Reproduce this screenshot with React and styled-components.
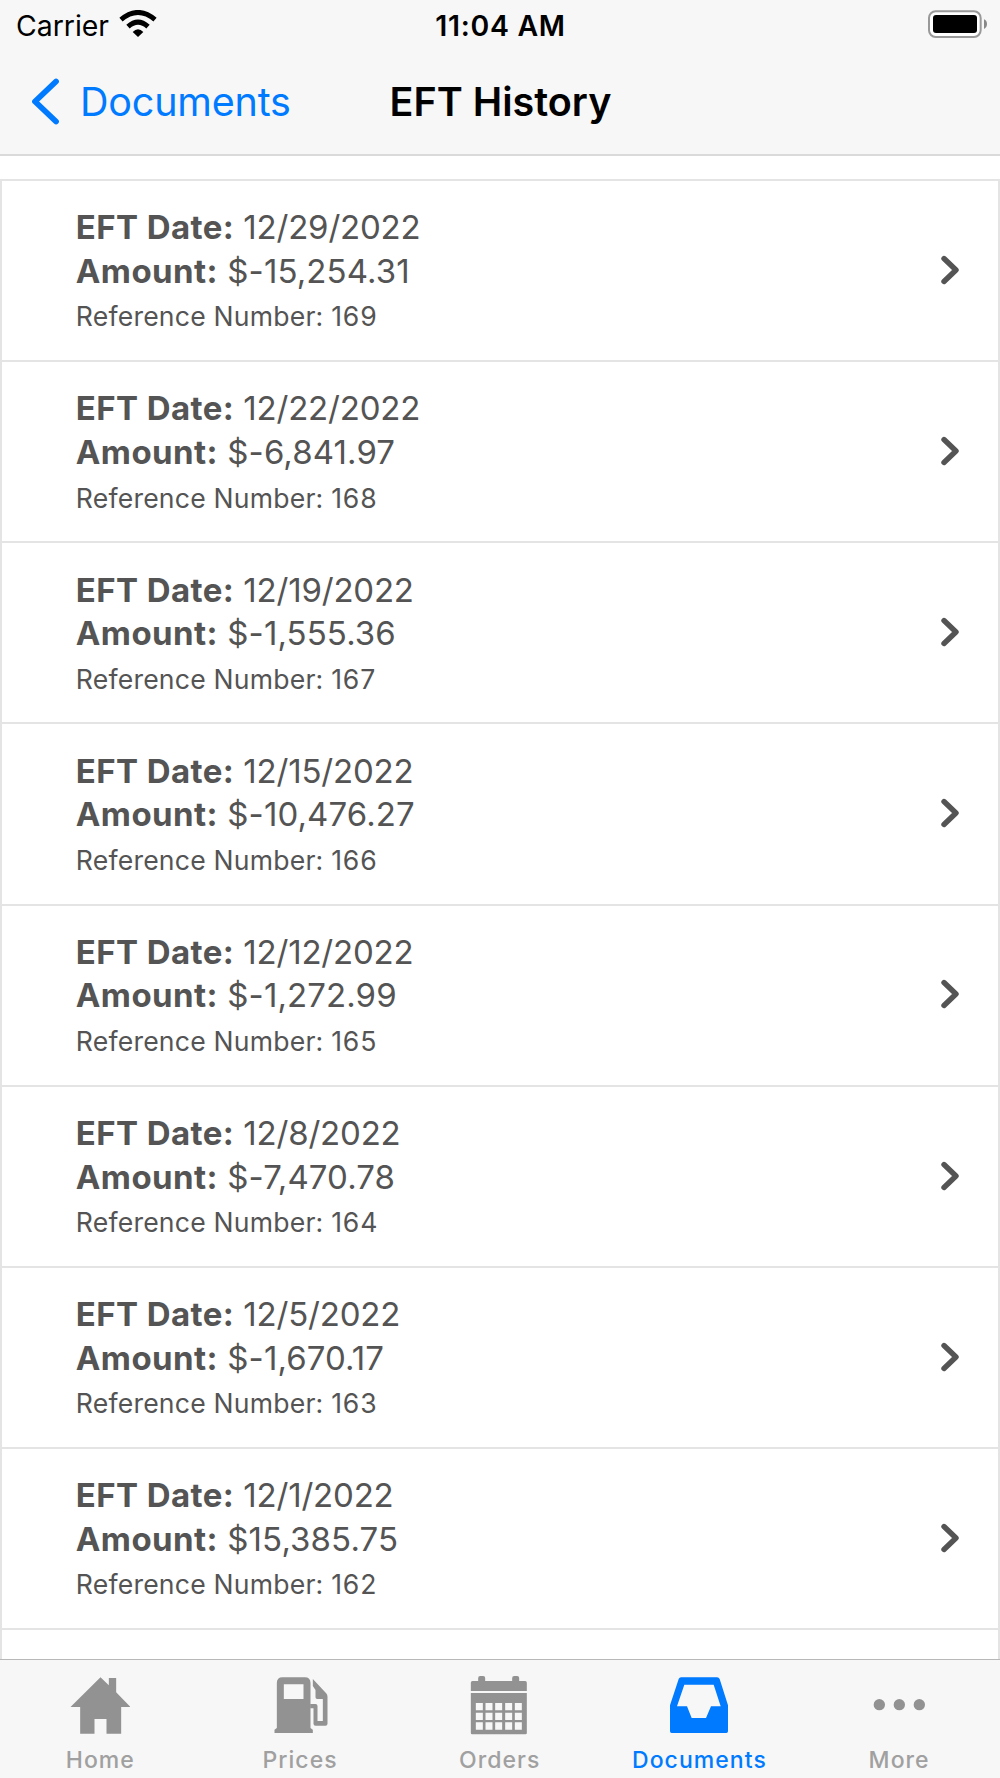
import React from "react";
import styled, { createGlobalStyle } from "styled-components";

const BLUE = "#007aff";
const GREY = "#929292";

const GlobalStyle = createGlobalStyle`
  *, *::before, *::after { box-sizing: border-box; }
  html, body { margin: 0; padding: 0; background: #fff; }
  body { font-family: Inter, "Liberation Sans", sans-serif; }
`;

const Screen = styled.div`
  width: 1000px;
  height: 1778px;
  display: flex;
  flex-direction: column;
  overflow: hidden;
  background: #fff;
`;

const Header = styled.header`
  flex: none;
  height: 156px;
  background: #f7f7f7;
  border-bottom: 2px solid #dadada;
`;

const StatusBar = styled.div`
  height: 50px;
  padding: 0 13px 0 16px;
  display: grid;
  grid-template-columns: 1fr auto 1fr;
  align-items: start;
  color: #000;
  font-size: 28.4px;
  line-height: 51px;
`;

const CarrierGroup = styled.div`
  display: flex;
  gap: 10px;
`;

const Clock = styled.time`
  font-weight: 570;
  letter-spacing: 0.7px;
  margin-right: 2px;
`;

const WifiIcon = styled.svg`
  width: 38px;
  height: 28px;
  margin-top: 10px;
`;

const BatteryIcon = styled.svg`
  justify-self: end;
  width: 60px;
  height: 28px;
  margin-top: 10px;
`;

const NavBar = styled.nav`
  height: 104px;
  padding: 0 29px 0 30px;
  display: grid;
  grid-template-columns: 1fr auto 1fr;
  font-size: 39.5px;
  line-height: 105px;
`;

const BackButton = styled.a`
  display: flex;
  gap: 19px;
  height: 105px;
  color: ${BLUE};
  letter-spacing: -0.2px;
`;

const BackChevron = styled.svg`
  width: 31px;
  height: 50px;
  margin-top: 26px;
`;

const Title = styled.h1`
  margin: 0;
  font-size: inherit;
  font-weight: 600;
  color: #000;
`;

const Content = styled.main`
  flex: 1;
  min-height: 0;
  overflow: hidden;
  padding-top: 23px;
`;

const List = styled.ul`
  margin: 0;
  padding: 0;
  height: 1600px;
  list-style: none;
  border: 2px solid #e4e4e4;
`;

const Row = styled.li`
  height: 181.15px;
  padding: 25.3px 38px 0 73.8px;
  display: flex;
  justify-content: space-between;
  border-bottom: 2px solid #e4e4e4;
  color: #545454;
`;

const Line = styled.p`
  margin: 0;
  font-size: 33px;
  line-height: 43.6px;
  letter-spacing: ${(p) => p.$spacing};
`;

const Label = styled.strong`
  font-weight: 700;
  letter-spacing: 0.42px;
`;

const Reference = styled.p`
  margin: 0;
  font-size: 26.6px;
  line-height: 47.4px;
  letter-spacing: 0.2px;
`;

const ReferenceValue = styled.span`
  letter-spacing: 0.9px;
`;

const RowChevron = styled.svg`
  width: 20px;
  height: 30px;
  margin-top: 48.6px;
`;

const TabBar = styled.footer`
  flex: none;
  height: 119px;
  padding: 15px 1.5px 0 0;
  display: grid;
  grid-template-columns: repeat(5, 1fr);
  background: #f7f7f7;
  border-top: 1px solid #b8b8b8;
`;

const Tab = styled.a`
  display: flex;
  flex-direction: column;
  align-items: center;
  color: ${(p) => (p.$active ? BLUE : "#a0a0a0")};
  font-size: 23px;
  font-weight: 500;
  line-height: 28px;
  letter-spacing: 1.05px;
  text-indent: 1px;
`;

const TabIcon = styled.svg`
  width: 60px;
  height: 60px;
  margin-bottom: 11px;
  fill: ${(p) => (p.$active ? BLUE : GREY)};
`;

const records = [
  ["12/29/2022", "$-15,254.31", 169],
  ["12/22/2022", "$-6,841.97", 168],
  ["12/19/2022", "$-1,555.36", 167],
  ["12/15/2022", "$-10,476.27", 166],
  ["12/12/2022", "$-1,272.99", 165],
  ["12/8/2022", "$-7,470.78", 164],
  ["12/5/2022", "$-1,670.17", 163],
  ["12/1/2022", "$15,385.75", 162],
];

const calendarCells = [279, 308, 337]
  .flatMap((y) => [138, 167, 196, 226, 255].map((x) => `M${x} ${y}v22h21v-22z`))
  .join("");

const tabs = [
  {
    name: "Home",
    box: "89.5 195 180 180",
    shape: <path d="M181 202L206 226V204H228V247L271 291H243V371H199V327H163V371H120V291H91Z" />,
  },
  {
    name: "Prices",
    box: "688.5 195 180 180",
    shape: (
      <>
        <path fillRule="evenodd" d="M709 354V219Q709 202 726 202H793Q810 202 810 219V354L817 359V369H702V359ZM730 223V267H789V223Z" />
        <path d="M809 282H825Q831 282 831 288V333H847V267H830Q825 267 825 262V240L817 228V207L857 250Q861 254 861 260V341Q861 347 855 347H825Q819 347 819 341V295H809Z" />
      </>
    ),
  },
  {
    name: "Orders",
    box: "117.5 195 180 180",
    shape: (
      <>
        <path d="M123 243V218Q123 213 128 213H145V204Q145 198 151 198H160Q166 198 166 204V213H247V204Q247 198 253 198H262Q268 198 268 204V213H286Q291 213 291 218V243Z" />
        <path fillRule="evenodd" d={`M123 249H291V369Q291 373 287 373H127Q123 373 123 369Z${calendarCells}`} />
      </>
    ),
  },
  {
    name: "Documents",
    active: true,
    box: "717 195 180 180",
    shape: (
      <path
        fillRule="evenodd"
        d="M753 202H861Q867 202 869 207L894 286V364Q894 369 889 369H725Q720 369 720 364V286L746 207Q748 202 753 202ZM763 224L741 289H771L785 324H828L843 289H872L851 224Z"
      />
    ),
  },
  {
    name: "More",
    box: "266 195 180 180",
    shape: [297, 357, 417].map((x) => <circle key={x} cx={x} cy="284" r="17" />),
  },
];

export default function App() {
  return (
    <Screen>
      <GlobalStyle />
      <Header>
        <StatusBar>
          <CarrierGroup>
            <span>Carrier</span>
            <WifiIcon viewBox="359 30 114 84">
              <path d="M416 111L400 96Q416 79 432 96Z" />
              <path d="M386 80Q416 53 446 80" fill="none" stroke="#000" strokeWidth="15" />
              <path d="M365 59Q416 16 467 59" fill="none" stroke="#000" strokeWidth="15" />
            </WifiIcon>
          </CarrierGroup>
          <Clock>11:04 AM</Clock>
          <BatteryIcon viewBox="201 30 180 84">
            <rect x="207" y="34" width="155" height="77" rx="20" fill="#fff" stroke="#999" strokeWidth="6" />
            <rect x="219" y="45" width="132" height="54" rx="9" />
            <path d="M372 58Q381 62 381 72T372 87Z" fill="#888" />
          </BatteryIcon>
        </StatusBar>
        <NavBar>
          <BackButton>
            <BackChevron viewBox="30 76 31 50" fill="none" stroke={BLUE} strokeWidth="5.8" strokeLinecap="round" strokeLinejoin="round">
              <path d="M56 81.5L35 101.5L56 121.5" />
            </BackChevron>
            Documents
          </BackButton>
          <Title>EFT History</Title>
        </NavBar>
      </Header>
      <Content>
        <List>
          {records.map(([date, amount, reference]) => (
            <Row key={reference}>
              <div>
                <Line $spacing="-0.2px"><Label>EFT Date:</Label> {date}</Line>
                <Line $spacing="0.1px"><Label>Amount:</Label> {amount}</Line>
                <Reference>Reference Number: <ReferenceValue>{reference}</ReferenceValue></Reference>
              </div>
              <RowChevron viewBox="940 255 20 30" fill="none" stroke="#545454" strokeWidth="5.4" strokeLinecap="round" strokeLinejoin="round">
                <path d="M944 258.5L956 270L944 281.5" />
              </RowChevron>
            </Row>
          ))}
        </List>
      </Content>
      <TabBar>
        {tabs.map((tab) => (
          <Tab key={tab.name} $active={tab.active}>
            <TabIcon viewBox={tab.box} $active={tab.active}>{tab.shape}</TabIcon>
            {tab.name}
          </Tab>
        ))}
      </TabBar>
    </Screen>
  );
}
